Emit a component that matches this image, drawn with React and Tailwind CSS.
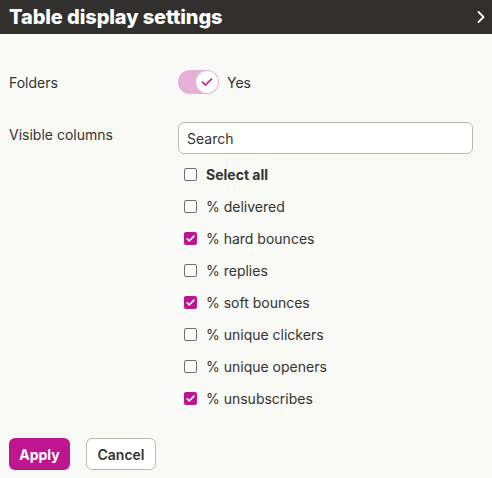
import React, { useState } from "react";

const columns = [
  { label: "% delivered", checked: false },
  { label: "% hard bounces", checked: true },
  { label: "% replies", checked: false },
  { label: "% soft bounces", checked: true },
  { label: "% unique clickers", checked: false },
  { label: "% unique openers", checked: false },
  { label: "% unsubscribes", checked: true },
];

const Check = ({ checked }) =>
  checked ? (
    <span className="w-[13px] h-[13px] rounded-[2px] bg-[#bd168f] flex items-center justify-center">
      <svg width="11" height="11" viewBox="0 0 12 12" fill="none">
        <path d="M2.2 6.2l2.5 2.4L9.8 3.4" stroke="#fff" strokeWidth="1.6" strokeLinecap="round" strokeLinejoin="round" />
      </svg>
    </span>
  ) : (
    <span className="w-[13px] h-[13px] rounded-[2px] border border-[#6f6f6f] bg-white" />
  );

export default function App() {
  const [cols] = useState(columns);
  return (
    <div className="w-[492px] h-[478px] bg-[#f9f9f6] text-[#333330] font-['Inter','Noto_Sans',sans-serif] overflow-hidden">
      {/* header */}
      <div className="h-[34px] bg-[#31302c] flex items-center justify-between pl-[9px] pr-[6px]">
        <span className="text-white text-[20px] font-extrabold tracking-[-0.1px]">Table display settings</span>
        <svg width="10" height="14" viewBox="0 0 10 14" fill="none">
          <path d="M2.5 2l5 5-5 5" stroke="#fff" strokeWidth="1.8" strokeLinecap="round" strokeLinejoin="round" />
        </svg>
      </div>

      <div className="pl-[9px] pt-[36px]">
        {/* folders */}
        <div className="flex items-center h-[24px]">
          <span className="w-[169px] text-[14px]">Folders</span>
          <div className="flex items-center gap-[8px]">
            <div className="w-[41px] h-[24px] rounded-full bg-[#e6b1d9] flex items-center justify-end pr-[1px]">
              <div className="w-[22px] h-[22px] rounded-full bg-white flex items-center justify-center">
                <svg width="12" height="10" viewBox="0 0 12 10" fill="none">
                  <path d="M1.5 5.2l3 2.8L10.5 2" stroke="#bd168f" strokeWidth="1.7" strokeLinecap="round" strokeLinejoin="round" />
                </svg>
              </div>
            </div>
            <span className="text-[14px]">Yes</span>
          </div>
        </div>

        {/* visible columns */}
        <div className="flex mt-[28px]">
          <span className="w-[169px] text-[14px] pt-[2px]">Visible columns</span>
          <div className="flex flex-col">
            <div className="w-[295px] h-[32px] rounded-[6px] border border-[#b8b8b4] bg-white flex items-center px-[8px] text-[14px] text-[#333]">
              Search
            </div>
            <div className="flex flex-col mt-[4px] pl-[6px]">
              <label className="h-[32px] flex items-center gap-[9px] text-[14px] font-bold">
                <Check checked={false} />
                Select all
              </label>
              {cols.map((c) => (
                <label key={c.label} className="h-[32px] flex items-center gap-[9px] text-[14px]">
                  <Check checked={c.checked} />
                  {c.label}
                </label>
              ))}
            </div>
          </div>
        </div>

        {/* actions */}
        <div className="flex gap-[16px] mt-[24px]">
          <button className="h-[32px] w-[61px] rounded-[6px] bg-[#bd168f] text-white text-[14px] font-bold">Apply</button>
          <button className="h-[32px] w-[70px] rounded-[6px] border border-[#b8b8b4] bg-white text-[14px] font-semibold text-[#333]">Cancel</button>
        </div>
      </div>
    </div>
  );
}
